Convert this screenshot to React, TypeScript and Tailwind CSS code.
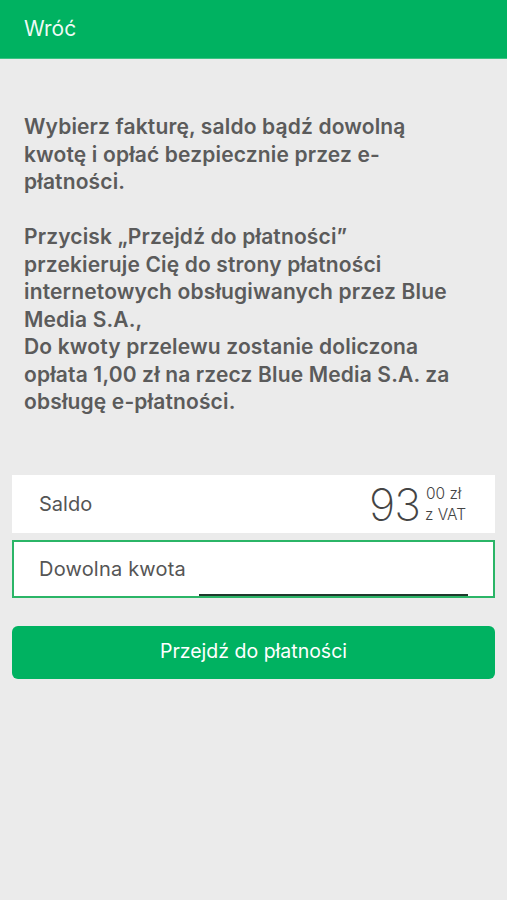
export default function App() {
  return (
    <div
      className="w-[507px] h-[900px] bg-[#ebebeb] flex flex-col"
      style={{ fontFamily: 'Inter, "Liberation Sans", Arial, sans-serif' }}
    >
      {/* Header */}
      <div className="h-[59px] bg-[#00b261] flex items-center px-6 border-b border-[#3cc283]">
        <span className="text-[21px] text-white/95">Wróć</span>
      </div>

      {/* Info text */}
      <div className="px-6 pt-[54px] text-[21px] leading-[27.5px] font-semibold tracking-[0.15px] text-[#5b5b5b] whitespace-pre-line">
        {'Wybierz fakturę, saldo bądź dowolną\nkwotę i opłać bezpiecznie przez e-\npłatności.\n\nPrzycisk „Przejdź do płatności”\nprzekieruje Cię do strony płatności\ninternetowych obsługiwanych przez Blue\nMedia S.A.,\nDo kwoty przelewu zostanie doliczona\nopłata 1,00 zł na rzecz Blue Media S.A. za\nobsługę e-płatności.'}
      </div>

      {/* Saldo row */}
      <div className="mx-3 mt-[59px] h-[58px] bg-white flex items-center justify-between pl-[27px] pr-[29px]">
        <span className="text-[20px] text-[#555]">Saldo</span>
        <div className="flex items-center gap-[5px] text-[#444]">
          <span className="text-[45px] font-extralight leading-none tracking-[-1px] mt-[2px]">93</span>
          <div className="flex flex-col text-[15.5px] leading-[21px] font-light">
            <span className="pl-[1px]">00 zł</span>
            <span>z VAT</span>
          </div>
        </div>
      </div>

      {/* Custom amount */}
      <div className="mx-3 mt-[7px] h-[58px] bg-white border-2 border-[#2bb567] flex items-center pl-[25px] relative">
        <span className="text-[20px] tracking-[0.2px] text-[#555]">Dowolna kwota</span>
        <div className="absolute left-[185px] right-[25px] bottom-0 h-[2px] bg-[#1f3a2c]" />
      </div>

      {/* Pay button */}
      <button className="mx-3 mt-[28px] h-[53px] rounded-[6px] bg-[#00b261] text-white text-[19.5px] flex items-center justify-center">
        Przejdź do płatności
      </button>
    </div>
  );
}
